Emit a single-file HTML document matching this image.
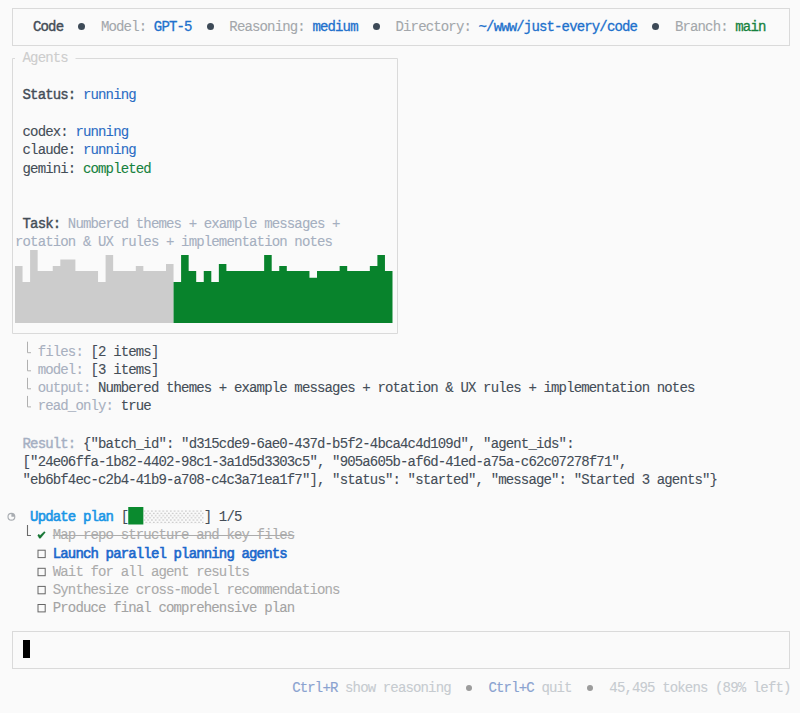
<!DOCTYPE html>
<html><head><meta charset="utf-8">
<style>
html,body{margin:0;padding:0;background:#fafafa;width:800px;height:713px;overflow:hidden;position:relative}
body{font-family:"Liberation Mono",monospace;font-size:14px;color:#444d57}
.r{position:absolute;white-space:pre;height:18px;line-height:18px;letter-spacing:-0.8514px}
b{font-weight:normal;-webkit-text-stroke-width:0.4px}
.r{-webkit-text-stroke-width:0.1px}
.g{color:#a3a7ab}
.bl{color:#2a6cc4}
.gr{color:#16823e}
.hv{-webkit-text-stroke-width:0.3px}
.r .bl.hv{color:#2070cc}
.ct{color:#8aa2d0;-webkit-text-stroke-width:0.15px}
.bu{display:inline-block;width:7.55px;height:18px;position:relative;vertical-align:top}
.bu i{position:absolute;left:calc(50% - 0.2px);top:9.1px;border-radius:50%}
.pb{display:inline-block;width:15px;height:15px;background:#0a7f2e;vertical-align:-3px}
.sh{display:inline-block;width:60px;height:15px;vertical-align:-3px;background-image:radial-gradient(#bdbdbd 0.7px,transparent 0.8px);background-size:2px 2px}
svg{position:absolute;left:0;top:0}
</style></head><body>
<svg width="800" height="713"><rect x="12.5" y="8.5" width="777" height="37" fill="none" stroke="#dadada" stroke-width="1"/><rect x="12.5" y="631.5" width="777" height="37" fill="none" stroke="#dadada" stroke-width="1"/><path d="M75.5 58.5 H397.5 V333.5 H12.5 V58.5 H15" fill="none" stroke="#dadada" stroke-width="1"/><path d="M15.00 323 L15.00 266 L22.55 266 L22.55 282 L30.10 282 L30.10 250 L37.65 250 L37.65 271 L45.20 271 L45.20 271 L52.75 271 L52.75 266 L60.30 266 L60.30 259.4 L67.85 259.4 L67.85 259.4 L75.40 259.4 L75.40 271 L82.95 271 L82.95 271 L90.50 271 L90.50 271 L98.05 271 L98.05 282 L105.60 282 L105.60 255 L113.15 255 L113.15 271 L120.70 271 L120.70 271 L128.25 271 L128.25 271 L135.80 271 L135.80 266 L143.35 266 L143.35 271 L150.90 271 L150.90 271 L158.45 271 L158.45 271 L166.00 271 L166.00 264 L173.55 264 L173.55 323 Z" fill="#cccccc"/><path d="M173.55 323 L173.55 282 L181.10 282 L181.10 255 L188.65 255 L188.65 271 L196.20 271 L196.20 282 L203.75 282 L203.75 271 L211.30 271 L211.30 282 L218.85 282 L218.85 264 L226.40 264 L226.40 271 L233.95 271 L233.95 271 L241.50 271 L241.50 271 L249.05 271 L249.05 271 L256.60 271 L256.60 271 L264.15 271 L264.15 255 L271.70 255 L271.70 271 L279.25 271 L279.25 266 L286.80 266 L286.80 271 L294.35 271 L294.35 271 L301.90 271 L301.90 271 L309.45 271 L309.45 277.75 L317.00 277.75 L317.00 271 L324.55 271 L324.55 271 L332.10 271 L332.10 271 L339.65 271 L339.65 266 L347.20 266 L347.20 271 L354.75 271 L354.75 271 L362.30 271 L362.30 271 L369.85 271 L369.85 266 L377.40 266 L377.40 255 L384.95 255 L384.95 271 L392.50 271 L392.50 323 Z" fill="#08832c"/><path d="M27.5 341.7 V352.7 H31" stroke="#b0b0b0" stroke-width="1" fill="none"/><path d="M27.5 359.8 V370.8 H31" stroke="#b0b0b0" stroke-width="1" fill="none"/><path d="M27.5 377.8 V388.8 H31" stroke="#b0b0b0" stroke-width="1" fill="none"/><path d="M27.5 395.9 V406.9 H31" stroke="#b0b0b0" stroke-width="1" fill="none"/><path d="M27.5 525 V535.5 H31" stroke="#6a6a6a" stroke-width="1.1" fill="none"/><path d="M37.7 535.5 L38.8 534.1 L40.0 535.5 L44.3 531.4 L45.3 532.4 L40.5 538.3 L39.3 538.3 Z" fill="#147532" stroke="#147532" stroke-width="0.3" stroke-linejoin="round"/><rect x="38" y="550.2" width="7.2" height="7.4" stroke="#666" stroke-width="1" fill="none"/><rect x="38" y="568.3" width="7.2" height="7.4" stroke="#666" stroke-width="1" fill="none"/><rect x="38" y="586.4" width="7.2" height="7.4" stroke="#666" stroke-width="1" fill="none"/><rect x="38" y="604.5" width="7.2" height="7.4" stroke="#666" stroke-width="1" fill="none"/><circle cx="11.4" cy="516.8" r="3.4" stroke="#a9adb2" stroke-width="1.15" fill="none"/><path d="M11.4 516.8 V513.4 A3.4 3.4 0 0 1 14.8 516.8 Z" fill="#a9adb2"/><defs><pattern id="chk" x="143.5" y="510.2" width="3.775" height="4.5" patternUnits="userSpaceOnUse"><rect x="0.3" y="0.3" width="1.15" height="1.15" fill="#ababab"/><rect x="2.19" y="2.55" width="1.15" height="1.15" fill="#ababab"/></pattern></defs><rect x="128.25" y="507" width="15.1" height="17.5" fill="#0a8a2e"/><rect x="143.5" y="510.2" width="60.2" height="13.4" fill="url(#chk)"/><rect x="23" y="640" width="7" height="18" fill="#000"/></svg>
<div class="r" style="left:33px;top:17.50px;"><b>Code</b>  <span class="bu"><i style="background:#3d4a57;width:7px;height:7px;margin-left:-3.5px;margin-top:-3.5px"></i></span>  <span class="g">Model:</span> <span class="bl hv">GPT-5</span>  <span class="bu"><i style="background:#3d4a57;width:7px;height:7px;margin-left:-3.5px;margin-top:-3.5px"></i></span>  <span class="g">Reasoning:</span> <span class="bl hv">medium</span>  <span class="bu"><i style="background:#3d4a57;width:7px;height:7px;margin-left:-3.5px;margin-top:-3.5px"></i></span>  <span class="g">Directory:</span> <span class="bl hv">~/www/just-every/code</span>  <span class="bu"><i style="background:#3d4a57;width:7px;height:7px;margin-left:-3.5px;margin-top:-3.5px"></i></span>  <span class="g">Branch:</span> <span class="gr hv">main</span></div>
<div class="r" style="left:22.55px;top:49.00px;color:#cdcdcd">Agents</div>
<div class="r" style="left:22.55px;top:86.20px;"><b>Status:</b> <span class="bl">running</span></div>
<div class="r" style="left:22.55px;top:122.50px;">codex: <span class="bl">running</span></div>
<div class="r" style="left:22.55px;top:140.60px;">claude: <span class="bl">running</span></div>
<div class="r" style="left:22.55px;top:159.60px;">gemini: <span class="gr">completed</span></div>
<div class="r" style="left:22.55px;top:215.00px;color:#a5afc0"><b style="color:#444d57">Task:</b> Numbered themes + example messages +</div>
<div class="r" style="left:15px;top:233.00px;color:#a5afc0">rotation &amp; UX rules + implementation notes</div>
<div class="r" style="left:37.65px;top:342.60px;"><span style="color:#a8b0bf">files:</span> [2 items]</div>
<div class="r" style="left:37.65px;top:360.50px;"><span style="color:#a8b0bf">model:</span> [3 items]</div>
<div class="r" style="left:37.65px;top:378.60px;"><span style="color:#a8b0bf">output:</span> Numbered themes + example messages + rotation &amp; UX rules + implementation notes</div>
<div class="r" style="left:37.65px;top:396.60px;"><span style="color:#a8b0bf">read_only:</span> true</div>
<div class="r" style="left:22.55px;top:434.60px;"><b style="color:#a5afc2">Result:</b> {"batch_id": "d315cde9-6ae0-437d-b5f2-4bca4c4d109d", "agent_ids":</div>
<div class="r" style="left:22.55px;top:453.30px;">["24e06ffa-1b82-4402-98c1-3a1d5d3303c5", "905a605b-af6d-41ed-a75a-c62c07278f71",</div>
<div class="r" style="left:22.55px;top:471.40px;">"eb6bf4ec-c2b4-41b9-a708-c4c3a71ea1f7"], "status": "started", "message": "Started 3 agents"}</div>
<div class="r" style="left:30.1px;top:508.30px;"><b style="color:#1a96e6;-webkit-text-stroke-width:0.6px">Update plan</b> [          ] 1/5</div>
<div class="r" style="left:52.75px;top:525.90px;color:#acacac;text-decoration:line-through;text-decoration-thickness:1.4px">Map repo structure and key files</div>
<div class="r" style="left:52.75px;top:544.50px;"><b style="color:#1a68cc;-webkit-text-stroke-width:0.6px">Launch parallel planning agents</b></div>
<div class="r" style="left:52.75px;top:562.60px;color:#ababab">Wait for all agent results</div>
<div class="r" style="left:52.75px;top:580.70px;color:#ababab">Synthesize cross-model recommendations</div>
<div class="r" style="left:52.75px;top:599.30px;color:#a3a3a3">Produce final comprehensive plan</div>
<div class="r" style="left:292.2px;top:679.00px;color:#c6cbd0"><span class="ct">Ctrl+R</span> show reasoning  <span class="bu"><i style="background:#9c9c9c;width:6px;height:6px;margin-left:-3.0px;margin-top:-3.0px"></i></span>  <span class="ct">Ctrl+C</span> quit  <span class="bu"><i style="background:#9c9c9c;width:6px;height:6px;margin-left:-3.0px;margin-top:-3.0px"></i></span>  45,495 tokens (89% left)</div>
</body></html>
